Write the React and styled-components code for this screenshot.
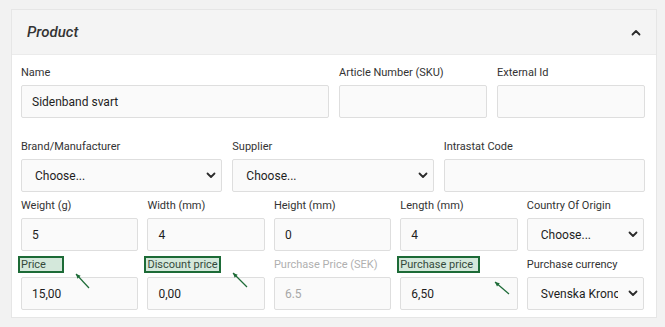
import React from 'react';
import styled, { createGlobalStyle } from 'styled-components';

const Global = createGlobalStyle`
  html, body {
    margin: 0;
    padding: 0;
    background: #f2f2f2;
    font-family: Roboto, "Liberation Sans", Arial, sans-serif;
    color: #222;
  }
`;

const Page = styled.div`
  width: 665px;
  height: 327px;
  padding: 9px 8px 0 11px;
  box-sizing: border-box;
`;

const Card = styled.div`
  width: 646px;
  border: 1px solid #e6e6e6;
  background: #fff;
  box-sizing: border-box;
`;

const Header = styled.div`
  height: 45px;
  display: flex;
  align-items: center;
  justify-content: space-between;
  padding: 0 15px 0 15px;
  background: #f4f4f4;
  border-bottom: 1px solid #ebebeb;
  box-sizing: border-box;
`;

const Title = styled.div`
  font-size: 15px;
  font-style: italic;
  font-weight: 500;
  color: #333;
`;

const Body = styled.div`
  padding: 11px 10px 7px 9px;
`;

const Row = styled.div`
  display: grid;
  grid-template-columns: ${p => p.cols};
  column-gap: ${p => p.gap || 10}px;
  margin-right: ${p => p.inset || 0}px;
  margin-bottom: ${p => p.mb || 0}px;
`;

const Field = styled.div`
  position: relative;
  display: flex;
  flex-direction: column;
  min-width: 0;
`;

const Label = styled.label`
  font-size: 11px;
  line-height: 13px;
  height: 13px;
  margin-bottom: 6px;
  color: ${p => (p.muted ? '#b0b0b0' : '#333')};
  white-space: nowrap;
`;

const Input = styled.div`
  height: 33px;
  box-sizing: border-box;
  border: 1px solid #dedede;
  border-radius: 2px;
  background: #fafafa;
  padding: 0 10px;
  display: flex;
  align-items: center;
  font-size: 12px;
  color: ${p => (p.disabled ? '#a8a8a8' : '#1e1e1e')};
`;

const Select = styled(Input)`
  padding: 0 5px 0 13px;
  justify-content: space-between;
  gap: 10px;
`;

const SelectText = styled.span`
  overflow: hidden;
  white-space: nowrap;
  text-overflow: clip;
`;

const Highlight = styled.span`
  position: absolute;
  left: -3px;
  top: -2px;
  width: ${p => p.w}px;
  height: 17px;
  box-sizing: border-box;
  border: 2px solid #1d6b37;
  background: rgba(60, 150, 90, 0.22);
  pointer-events: none;
`;

const Arrow = styled.svg`
  position: absolute;
  left: 0;
  top: 0;
  overflow: visible;
  pointer-events: none;
`;

const Chevron = ({ up }) => (
  <svg width="10" height="7" viewBox="0 0 10 7" style={{ flexShrink: 0 }}>
    <path
      d={up ? 'M1.5 5.5 L5 2 L8.5 5.5' : 'M1.5 1.5 L5 5 L8.5 1.5'}
      fill="none"
      stroke="#2b2b2b"
      strokeWidth="1.8"
      strokeLinecap="round"
      strokeLinejoin="round"
    />
  </svg>
);

const Pointer = ({ x1, y1, x2, y2 }) => {
  const a = Math.atan2(y2 - y1, x2 - x1);
  const l = 5;
  const p1 = [x2 - l * Math.cos(a - 0.45), y2 - l * Math.sin(a - 0.45)];
  const p2 = [x2 - l * Math.cos(a + 0.45), y2 - l * Math.sin(a + 0.45)];
  return (
    <Arrow width="1" height="1">
      <line x1={x1} y1={y1} x2={x2} y2={y2} stroke="#1d6b37" strokeWidth="1.2" />
      <polygon points={`${x2},${y2} ${p1[0]},${p1[1]} ${p2[0]},${p2[1]}`} fill="#1d6b37" />
    </Arrow>
  );
};

const TextField = ({ label, value, muted, disabled, hl, arrow }) => (
  <Field>
    <Label muted={muted}>{label}</Label>
    {hl && <Highlight w={hl} />}
    <Input disabled={disabled}>{value}</Input>
    {arrow && <Pointer {...arrow} />}
  </Field>
);

const SelectField = ({ label, value }) => (
  <Field>
    <Label>{label}</Label>
    <Select>
      <SelectText>{value}</SelectText>
      <Chevron />
    </Select>
  </Field>
);

const App = () => (
  <Page>
    <Global />
    <Card>
      <Header>
        <Title>Product</Title>
        <Chevron up />
      </Header>
      <Body>
        <Row cols="308px 148px 148px" mb={22}>
          <TextField label="Name" value="Sidenband svart" />
          <TextField label="Article Number (SKU)" value="" />
          <TextField label="External Id" value="" />
        </Row>
        <Row cols="repeat(3, 1fr)" inset={1} mb={7}>
          <SelectField label="Brand/Manufacturer" value="Choose..." />
          <SelectField label="Supplier" value="Choose..." />
          <TextField label="Intrastat Code" value="" />
        </Row>
        <Row cols="repeat(5, 1fr)" gap={9.25} inset={2} mb={7}>
          <TextField label="Weight (g)" value="5" />
          <TextField label="Width (mm)" value="4" />
          <TextField label="Height (mm)" value="0" />
          <TextField label="Length (mm)" value="4" />
          <SelectField label="Country Of Origin" value="Choose..." />
        </Row>
        <Row cols="repeat(5, 1fr)" gap={9.25} inset={2}>
          <TextField label="Price" value="15,00" hl={46} arrow={{ x1: 68, y1: 30, x2: 55, y2: 16 }} />
          <TextField label="Discount price" value="0,00" hl={77} arrow={{ x1: 100, y1: 29, x2: 86, y2: 15 }} />
          <TextField label="Purchase Price (SEK)" value="6.5" muted disabled />
          <TextField label="Purchase price" value="6,50" hl={83} arrow={{ x1: 109, y1: 36, x2: 95, y2: 24 }} />
          <SelectField label="Purchase currency" value="Svenska Kronor" />
        </Row>
      </Body>
    </Card>
  </Page>
);

export default App;
